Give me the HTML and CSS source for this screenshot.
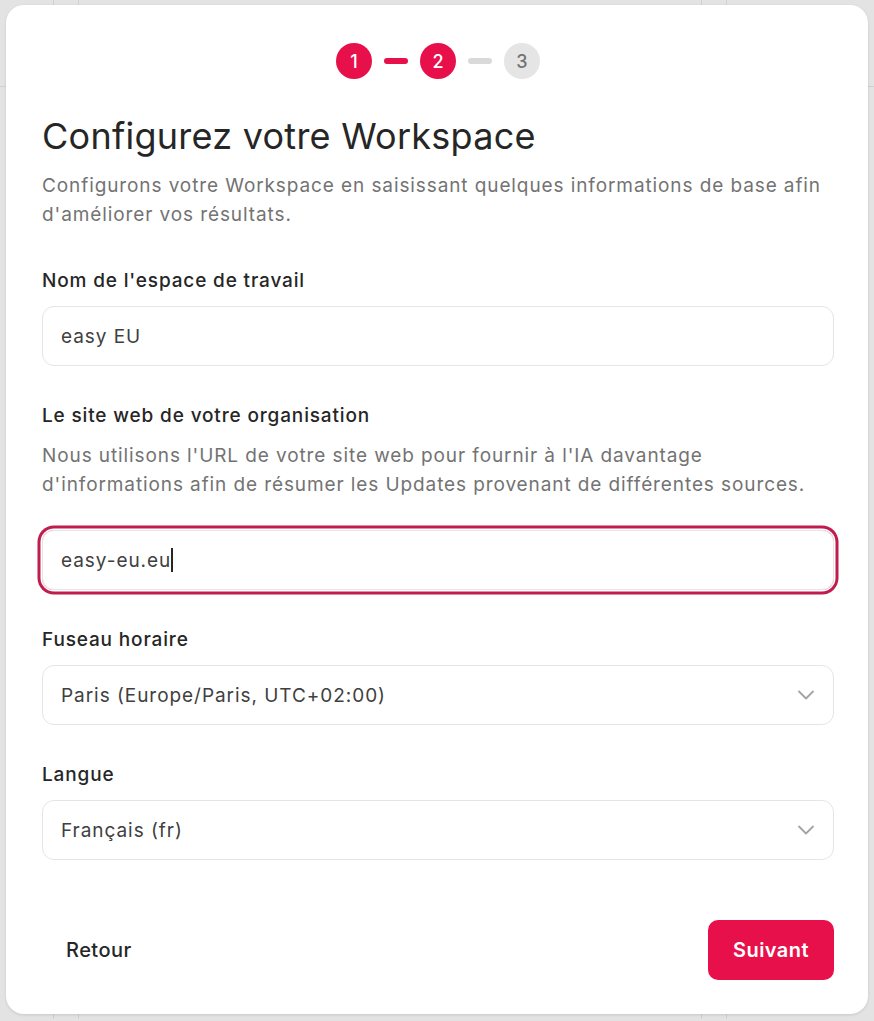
FILE: index.html
```html
<!DOCTYPE html>
<html lang="fr">

<head>
    <meta charset="UTF-8">
    <meta name="viewport" content="width=device-width, initial-scale=1.0">
    <title>Configurez votre Workspace</title>
    <link rel="stylesheet" href="styles.css">
</head>

<body>

    <div class="modal">
        <div class="stepper">
            <span class="step done">1</span>
            <span class="bar done"></span>
            <span class="step done">2</span>
            <span class="bar"></span>
            <span class="step">3</span>
        </div>

        <h1 class="title">Configurez votre Workspace</h1>
        <p class="intro">Configurons votre Workspace en saisissant quelques informations de base afin d'améliorer vos résultats.</p>

        <form name="frmWorkspace">
            <div class="field">
                <label>Nom de l'espace de travail</label>
                <div class="input">easy EU</div>
            </div>

            <div class="field">
                <label>Le site web de votre organisation</label>
                <p class="help">Nous utilisons l'URL de votre site web pour fournir à l'IA davantage d'informations afin de résumer les Updates provenant de différentes sources.</p>
                <div class="input focused">easy-eu.eu<span class="caret"></span></div>
            </div>

            <div class="field">
                <label>Fuseau horaire</label>
                <div class="input select">
                    <span>Paris (Europe/Paris, UTC+02:00)</span>
                    <svg width="18" height="10" viewBox="0 0 18 10"><path d="M2 1.5l7 7 7-7" fill="none" stroke="#a3a3a3" stroke-width="1.8" stroke-linecap="round" stroke-linejoin="round"/></svg>
                </div>
            </div>

            <div class="field">
                <label>Langue</label>
                <div class="input select">
                    <span>Français (fr)</span>
                    <svg width="18" height="10" viewBox="0 0 18 10"><path d="M2 1.5l7 7 7-7" fill="none" stroke="#a3a3a3" stroke-width="1.8" stroke-linecap="round" stroke-linejoin="round"/></svg>
                </div>
            </div>

            <div class="footer">
                <button type="button" class="btn-back">Retour</button>
                <button type="button" class="btn-next">Suivant</button>
            </div>
        </form>
    </div>

</body>

</html>
```

FILE: styles.css
```css
body {
    font-family: 'Inter', 'Liberation Sans', Arial, sans-serif;
    margin: 0;
    padding: 5px 6px;
    color: #262626;
    background-color: #e3e3e3;
    background-image:
        linear-gradient(#d0d0d0, #d0d0d0),
        linear-gradient(#d0d0d0, #d0d0d0),
        linear-gradient(#d0d0d0, #d0d0d0),
        linear-gradient(#d0d0d0, #d0d0d0),
        linear-gradient(#d0d0d0, #d0d0d0);
    background-size: 1px 100%, 1px 100%, 1px 100%, 1px 100%, 100% 1px;
    background-position: 53px 0, 78px 0, 701px 0, 726px 0, 0 86px;
    background-repeat: no-repeat;
}

.modal {
    background-color: #fff;
    border-radius: 18px;
    padding: 38px 34px 34px 36px;
    box-shadow: 0 1px 3px rgba(0, 0, 0, 0.12);
    height: 937px;
}

.stepper {
    display: flex;
    justify-content: center;
    align-items: center;
    gap: 12px;
}

.step {
    width: 36px;
    height: 36px;
    border-radius: 50%;
    background-color: #e5e5e5;
    color: #737373;
    font-size: 18px;
    font-weight: 500;
    display: flex;
    align-items: center;
    justify-content: center;
}

.step.done {
    background-color: #e8104a;
    color: #fff;
}

.bar {
    width: 24px;
    height: 6px;
    border-radius: 3px;
    background-color: #d9d9d9;
}

.bar.done {
    background-color: #e8104a;
}

.title {
    font-size: 36px;
    font-weight: 400;
    letter-spacing: 0.25px;
    line-height: 42px;
    margin: 36px 0 0;
    color: #262626;
}

.intro {
    font-size: 19px;
    letter-spacing: 0.9px;
    line-height: 29px;
    color: #737373;
    margin: 14px 0 0;
}

.field {
    margin-top: 38px;
}

.field:first-child {
    margin-top: 40px;
}

.field label {
    display: block;
    font-size: 19px;
    font-weight: 500;
    letter-spacing: 0.85px;
    line-height: 24px;
    color: #262626;
}

.help {
    font-size: 19px;
    letter-spacing: 0.9px;
    line-height: 29px;
    color: #737373;
    margin: 13px 0 0;
}

.help + .input {
    margin-top: 31px;
}

.input {
    margin-top: 13px;
    height: 60px;
    box-sizing: border-box;
    border: 1px solid #e5e5e5;
    border-radius: 12px;
    padding: 0 18px;
    display: flex;
    align-items: center;
    font-size: 19px;
    letter-spacing: 0.95px;
    color: #404040;
}

.input.focused {
    box-shadow: 0 0 0 1.5px #fff, 0 0 0 4.5px #be1d4e;
}

.caret {
    display: inline-block;
    width: 2px;
    height: 24px;
    margin-left: 0;
    background-color: #262626;
}

.input.select {
    justify-content: space-between;
    padding-right: 18px;
}

.footer {
    display: flex;
    justify-content: space-between;
    align-items: center;
    margin-top: 60px;
}

.footer button {
    font-family: inherit;
    font-size: 20px;
    letter-spacing: 0.45px;
    height: 60px;
    border: none;
    border-radius: 10px;
    cursor: pointer;
}

.btn-back {
    background: none;
    color: #262626;
    font-weight: 500;
    padding: 0 24px;
}

.btn-next {
    background-color: #e8104a;
    color: #fff;
    font-weight: 600;
    padding: 0 25px;
}
```
